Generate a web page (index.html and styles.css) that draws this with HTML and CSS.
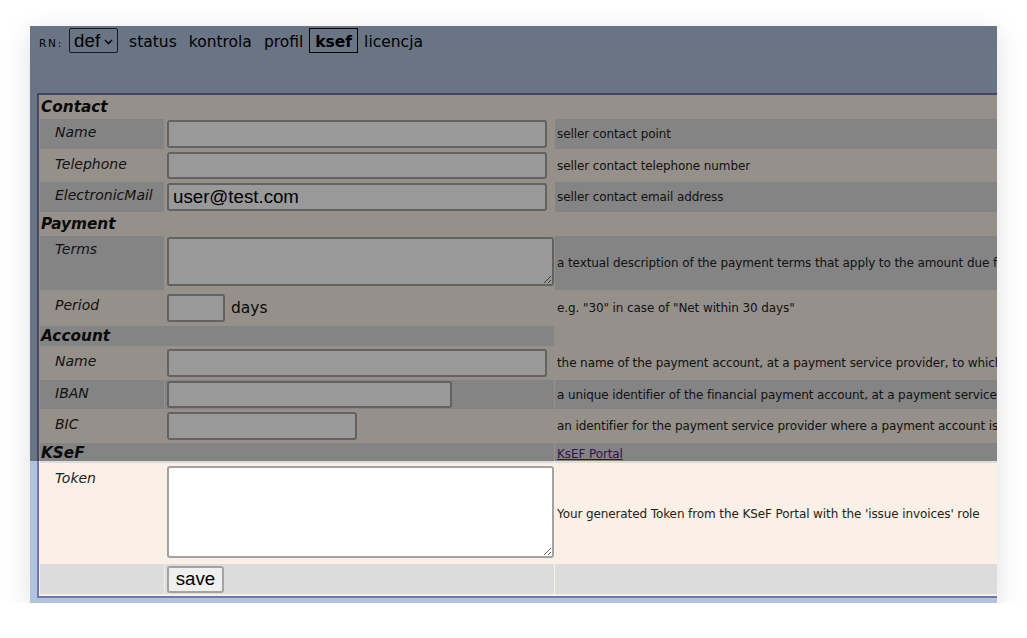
FILE: index.html
```html
<!DOCTYPE html>
<html>
<head>
<meta charset="utf-8">
<link rel="stylesheet" href="styles.css">
</head>
<body>
<div class="win">
  <div class="nav">
    <span class="rn">RN:</span>
    <span class="sel">def<svg class="chev" width="9" height="6" viewBox="0 0 9 6"><polyline points="1,1 4.5,4.5 8,1" fill="none" stroke="#111" stroke-width="1.6"/></svg></span>
    <span class="links">
      <a class="lnk">status</a><a class="lnk">kontrola</a><a class="lnk">profil</a><a class="lnk on">ksef</a><a class="lnk">licencja</a>
    </span>
  </div>
  <table class="form">
    <colgroup><col class="c1"><col class="c2"><col class="c3"></colgroup>
    <tr class="hd"><td colspan="2" class="l">Contact</td><td class="l"></td></tr>
    <tr><td class="lab d">Name</td><td class="inp l"><input class="w379" type="text"></td><td class="desc d">seller contact point</td></tr>
    <tr><td class="lab l">Telephone</td><td class="inp l"><input class="w379" type="text"></td><td class="desc l">seller contact telephone number</td></tr>
    <tr><td class="lab d">ElectronicMail</td><td class="inp l"><input class="w379" type="text" value="user@test.com"></td><td class="desc d">seller contact email address</td></tr>
    <tr class="hd"><td colspan="2" class="l">Payment</td><td class="l"></td></tr>
    <tr><td class="lab d">Terms</td><td class="inp l"><textarea class="terms"></textarea></td><td class="desc d">a textual description of the payment terms that apply to the amount due for payment (including description of possible penalties)</td></tr>
    <tr><td class="lab l">Period</td><td class="inp l"><div class="period"><input class="w57" type="text"><span>days</span></div></td><td class="desc l">e.g. "30" in case of "Net within 30 days"</td></tr>
    <tr class="hd"><td colspan="2" class="d">Account</td><td class="l"></td></tr>
    <tr><td class="lab l">Name</td><td class="inp l"><input class="w379" type="text"></td><td class="desc l">the name of the payment account, at a payment service provider, to which payment should be made</td></tr>
    <tr><td class="lab d">IBAN</td><td class="inp d"><input class="w284" type="text"></td><td class="desc d">a unique identifier of the financial payment account, at a payment service provider, to which payment should be made</td></tr>
    <tr><td class="lab l">BIC</td><td class="inp l"><input class="w189" type="text"></td><td class="desc l">an identifier for the payment service provider where a payment account is located</td></tr>
    <tr class="hd"><td colspan="2" class="d">KSeF</td><td class="desc d"><a class="portal" href="#">KsEF Portal</a></td></tr>
    <tr><td class="lab l">Token</td><td class="inp l"><textarea class="token"></textarea></td><td class="desc l">Your generated Token from the KSeF Portal with the 'issue invoices' role</td></tr>
    <tr><td class="lab d"></td><td class="inp d"><button class="save">save</button></td><td class="desc d"></td></tr>
  </table>
  <div class="dim"></div>
</div>
</body>
</html>
```

FILE: styles.css
```css
html, body {
  margin: 0;
  padding: 0;
  background: #ffffff;
}
body {
  font-family: "DejaVu Sans", Verdana, sans-serif;
}
.win {
  position: relative;
  margin: 26px 0 0 30px;
  width: 967px;
  height: 577px;
  overflow: hidden;
  background: #b0c4de;
  box-shadow: 0 6px 26px rgba(0, 0, 0, 0.13);
}
.nav {
  display: flex;
  align-items: center;
  height: 25px;
  padding: 2px 0 0 9px;
  font-size: 15.5px;
  color: #000;
}
.rn {
  font-size: 10.5px;
  letter-spacing: 1.8px;
  margin-right: 6px;
  padding-top: 5px;
}
.sel {
  display: inline-flex;
  align-items: center;
  box-sizing: border-box;
  width: 49px;
  height: 25px;
  border: 1px solid #22263a;
  border-radius: 2px;
  padding-left: 4px;
  font-family: "Liberation Sans", Arial, sans-serif;
  font-size: 18.7px;
}
.chev {
  margin-left: 4px;
  margin-top: 2px;
}
.links {
  display: flex;
  margin-left: 5px;
}
.lnk {
  display: inline-block;
  box-sizing: border-box;
  height: 25px;
  line-height: 23px;
  padding: 2px 5px 0;
  border: 1px solid transparent;
  color: #000;
  text-decoration: none;
}
.lnk.on {
  border-color: #000;
  font-weight: bold;
}
.form {
  margin: 40px 0 0 7px;
  border: 2px solid #7474b4;
  border-spacing: 1px 2px;
  background: #faf0e6;
  table-layout: fixed;
  width: 1300px;
}
.c1 { width: 124px; }
.c2 { width: 389px; }
.c3 { width: auto; }
.form td {
  padding: 1px;
}
.l { background: #faf0e6; }
.d { background: #dcdcdc; }
.hd td {
  font-weight: bold;
  font-style: italic;
  font-size: 15.3px;
  line-height: 19px;
  color: #111;
  padding: 1px 1px 0 1px;
}
.lab {
  vertical-align: top;
  font-style: italic;
  font-size: 14px;
  color: #222;
  padding-top: 5px !important;
  padding-left: 15px !important;
}
.inp {
  vertical-align: top;
}
.desc {
  vertical-align: middle;
  font-size: 12px;
  letter-spacing: -0.1px;
  white-space: nowrap;
  overflow: hidden;
  color: #222;
  padding: 1px 2px !important;
}
.hd td.desc {
  font-weight: normal;
  font-style: normal;
  font-size: 12px;
  line-height: 15px;
  padding-top: 3px !important;
}
input, textarea {
  display: block;
  box-sizing: border-box;
  margin: 0;
  border: 2px solid #a3a3a3;
  border-radius: 3px;
  background: #ffffff;
  font-family: "Liberation Sans", Arial, sans-serif;
  font-size: 18.7px;
  color: #000;
  padding: 0 4px;
}
input {
  height: 27.7px;
  margin-left: 1px;
}
.w379 { width: 380px; }
.w284 { width: 285px; }
.w189 { width: 190px; }
.w57 { width: 58px; }
textarea {
  width: 387px;
  margin-left: 1px;
  resize: both;
}
.terms {
  height: 49px;
  margin-bottom: 3px;
}
.token {
  height: 92px;
  margin: 0 0 3px 1px;
}
.period {
  display: flex;
  align-items: center;
  height: 30px;
  font-size: 15.5px;
  color: #111;
}
.period span {
  margin-left: 6px;
}
.portal {
  color: #551a8b;
  text-decoration: underline;
}
.save {
  display: block;
  box-sizing: border-box;
  margin: 1px 0 0 1px;
  height: 26.5px;
  width: 57px;
  padding: 0;
  border: 2px solid #a3a3a3;
  border-radius: 3px;
  background: #efefef;
  font-family: "Liberation Sans", Arial, sans-serif;
  font-size: 18.7px;
  color: #000;
}
.dim {
  position: absolute;
  left: 0;
  top: 0;
  right: 0;
  height: 435px;
  background: rgba(0, 0, 0, 0.4);
  pointer-events: none;
}
```
